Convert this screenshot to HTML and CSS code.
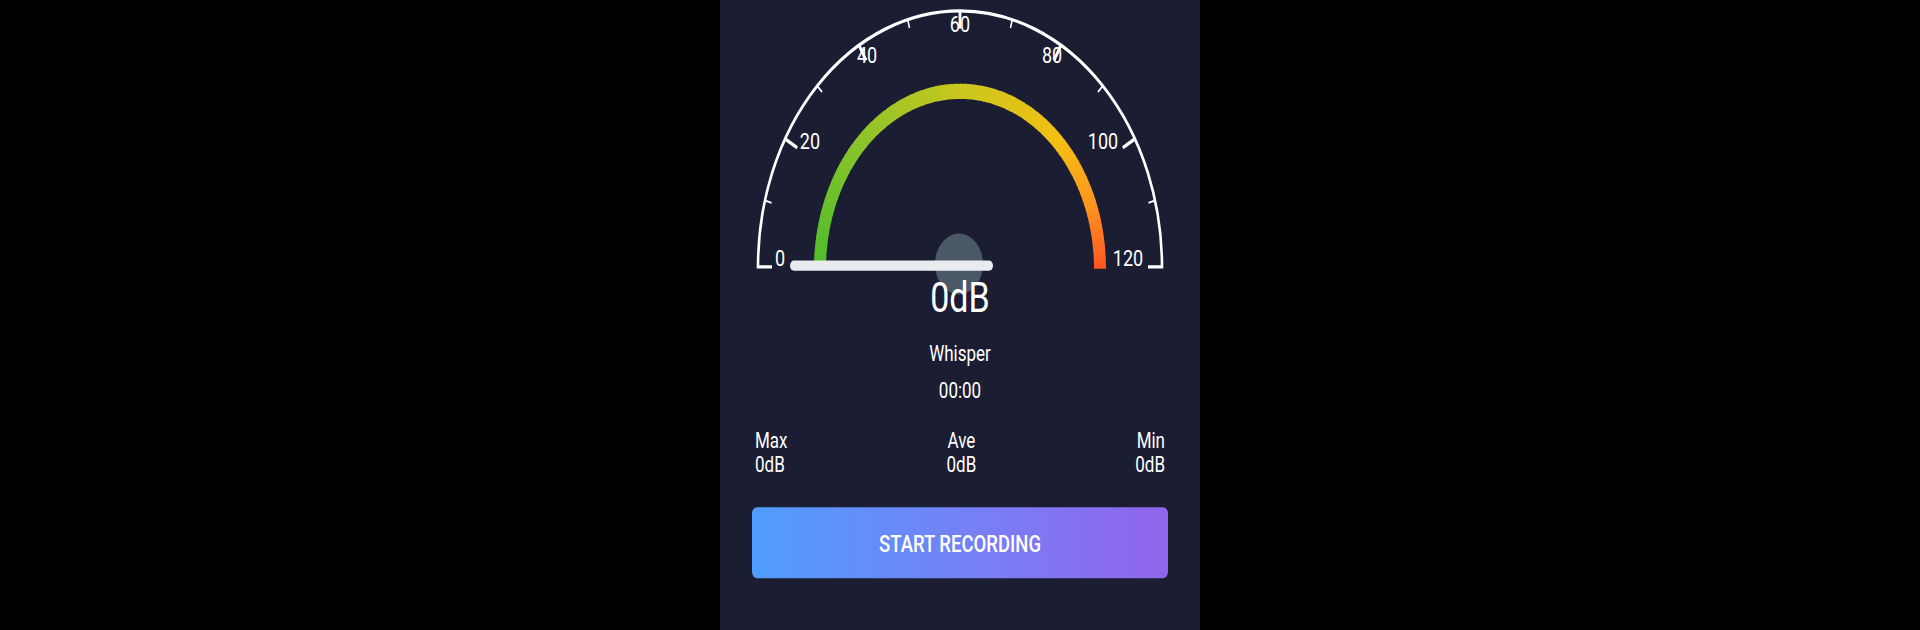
FILE: index.html
```html
<!DOCTYPE html>
<html>
  <head>
    <link rel="stylesheet" href="styles.css">
  </head>
  <body>
    <div class="phone">
      <div class="screen">
        <svg class="gauge" viewBox="0 0 480 217" width="480" height="217">
          <path class="dial" d="M 52 210.5 H 38 A 202 202 0 0 1 442 210.5 H 428" />
          <g class="tick-major">
            <line x1="65.1" y1="109.5" x2="77.2" y2="116.5" />
            <line x1="139" y1="35.6" x2="146" y2="47.7" />
            <line x1="240" y1="8.5" x2="240" y2="22.5" />
            <line x1="341" y1="35.6" x2="334" y2="47.7" />
            <line x1="414.9" y1="109.5" x2="402.8" y2="116.5" />
          </g>
          <g class="tick-minor">
            <line x1="44.9" y1="158.2" x2="51.6" y2="160" />
            <line x1="97.2" y1="67.7" x2="102.1" y2="72.6" />
            <line x1="187.7" y1="15.4" x2="189.5" y2="22.1" />
            <line x1="292.3" y1="15.4" x2="290.5" y2="22.1" />
            <line x1="382.8" y1="67.7" x2="377.9" y2="72.6" />
            <line x1="435.1" y1="158.2" x2="428.4" y2="160" />
          </g>
          <g class="gauge-labels">
            <text x="60" y="209.4">0</text>
            <text x="90" y="117.5">20</text>
            <text x="147" y="49.7">40</text>
            <text x="240" y="25.2">60</text>
            <text x="332" y="49.7">80</text>
            <text x="383" y="117.5">100</text>
            <text x="408" y="209.4">120</text>
          </g>
          <g class="gauge-arc"></g>
          <circle class="pivot" cx="239" cy="208.2" r="24" />
          <line class="needle" x1="74" y1="209.5" x2="269" y2="209.5" />
        </svg>

        <div class="level">0dB</div>
        <div class="level-name">Whisper</div>
        <div class="timer">00:00</div>

        <div class="stats">
          <div class="stat stat-left">
            <span>Max</span>
            <span>0dB</span>
          </div>
          <div class="stat">
            <span>Ave</span>
            <span>0dB</span>
          </div>
          <div class="stat stat-right">
            <span>Min</span>
            <span>0dB</span>
          </div>
        </div>

        <button class="record-btn">START RECORDING</button>
      </div>
    </div>

    <script type="text/javascript">
      const arcGroup = document.querySelector(".gauge-arc");
      const stops = [
        [0, [76, 188, 44]],
        [0.25, [140, 196, 42]],
        [0.5, [201, 199, 30]],
        [0.75, [245, 191, 20]],
        [0.88, [255, 150, 30]],
        [1, [255, 85, 35]]
      ];

      function colorAt(t) {
        for (let i = 1; i < stops.length; i++) {
          if (t <= stops[i][0]) {
            const [t0, c0] = stops[i - 1];
            const [t1, c1] = stops[i];
            const k = (t - t0) / (t1 - t0);
            const c = c0.map((v, j) => Math.round(v + (c1[j] - v) * k));
            return `rgb(${c[0]}, ${c[1]}, ${c[2]})`;
          }
        }
        return "rgb(255, 85, 35)";
      }

      const cx = 240, cy = 212, r = 140, n = 90;
      for (let i = 0; i < n; i++) {
        const a0 = Math.PI * (1 - i / n);
        let a1 = Math.PI * (1 - (i + 1) / n);
        if (i < n - 1) a1 -= 0.006;
        const x0 = cx + r * Math.cos(a0), y0 = cy - r * Math.sin(a0);
        const x1 = cx + r * Math.cos(a1), y1 = cy - r * Math.sin(a1);
        const seg = document.createElementNS("http://www.w3.org/2000/svg", "path");
        seg.setAttribute("d", `M ${x0} ${y0} A ${r} ${r} 0 0 1 ${x1} ${y1}`);
        seg.setAttribute("stroke", colorAt((i + 0.5) / n));
        arcGroup.appendChild(seg);
      }
    </script>
  </body>
</html>
```

FILE: styles.css
```css
* {
  box-sizing: border-box;
}
body {
  margin: 0;
  height: 630px;
  background-color: #000;
  display: flex;
  justify-content: center;
  font-family: Roboto, "Liberation Sans", sans-serif;
  color: #fff;
}

.phone {
  width: 480px;
  height: 630px;
  overflow: hidden;
  background-color: #1b1d33;
}

/* the capture is stretched vertically, so the whole screen is too */
.screen {
  height: 497px;
  padding: 0 32px;
  display: flex;
  flex-direction: column;
  align-items: center;
  transform: scaleY(1.268);
  transform-origin: top center;
}

.gauge {
  display: block;
  flex-shrink: 0;
  margin: 0 -32px;
  overflow: visible;
}
.dial {
  fill: none;
  stroke: #fff;
  stroke-width: 2.6;
  stroke-linejoin: miter;
}
.tick-major line {
  stroke: #fff;
  stroke-width: 2.8;
}
.tick-minor line {
  stroke: #fff;
  stroke-width: 1.6;
}
.gauge-labels text {
  fill: #fff;
  font-family: Roboto, "Liberation Sans", sans-serif;
  font-size: 18px;
  text-anchor: middle;
}
.gauge-arc path {
  fill: none;
  stroke-width: 12;
}
.pivot {
  fill: #4b5866;
}
.needle {
  stroke: #e9ebef;
  stroke-width: 8;
  stroke-linecap: round;
}

.level {
  font-size: 34px;
  line-height: 34px;
  position: relative;
}
.level-name {
  margin-top: 18px;
  font-size: 17px;
  line-height: 20px;
}
.timer {
  margin-top: 9px;
  font-size: 17px;
  line-height: 20px;
}

.stats {
  width: 100%;
  margin-top: 20px;
  padding: 0 3px 0 3px;
  display: flex;
  justify-content: space-between;
}
.stat {
  display: flex;
  flex-direction: column;
  align-items: center;
  font-size: 17px;
  line-height: 19.2px;
}
.stat-left {
  align-items: flex-start;
}
.stat-right {
  align-items: flex-end;
}

.record-btn {
  width: 100%;
  height: 56px;
  margin-top: 24px;
  padding-top: 3px;
  border: none;
  border-radius: 5px;
  background: linear-gradient(90deg, #4f9dfd, #7b7cf4 60%, #9065ec);
  color: #fff;
  font-family: Roboto, "Liberation Sans", sans-serif;
  font-size: 18.5px;
  font-weight: 500;
  cursor: pointer;
}
```
